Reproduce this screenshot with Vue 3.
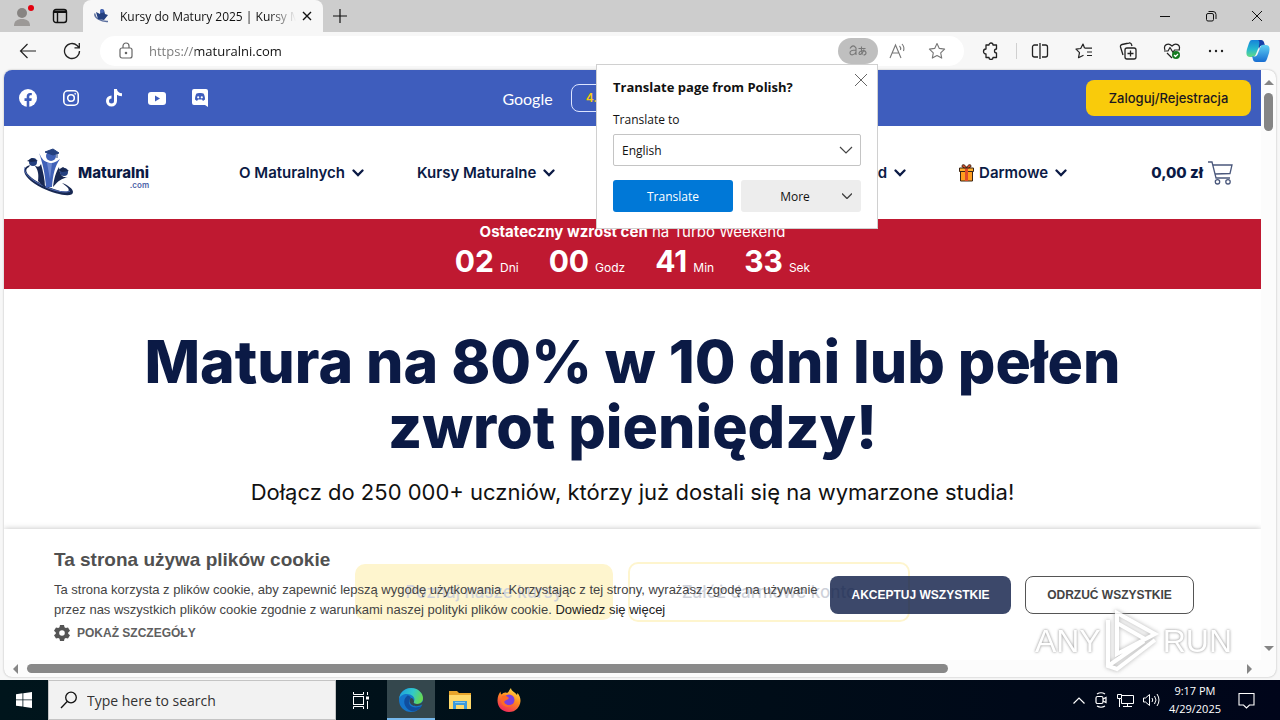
<script setup>
import { ref } from 'vue'

const url = ref('https://maturalni.com')
const language = ref('English')
const counters = [
  { value: '02', unit: 'Dni' },
  { value: '00', unit: 'Godz' },
  { value: '41', unit: 'Min' },
  { value: '33', unit: 'Sek' }
]
const menu = [
  { label: 'O Maturalnych' },
  { label: 'Kursy Maturalne' },
  { label: 'Turbo Weekend', push: true },
  { label: 'Darmowe', gift: true }
]
</script>

<template>
  <div class="desktop">
    <div class="browser">
      <header class="tabs">
        <button class="ico profile" aria-label="Profile">
          <svg width="30" height="30" viewBox="0 0 30 30"><circle cx="15" cy="12" r="5" fill="#878482" /><path d="M7 25c0-5 3-7 8-7s8 2 8 7z" fill="#9c9997" /><circle cx="24" cy="7" r="3" fill="#e3000f" /></svg>
        </button>
        <button class="ico workspace" aria-label="Tab actions">
          <svg width="16" height="16" viewBox="0 0 16 16" fill="none" stroke="#111" stroke-width="1.4"><rect x="1.5" y="1.5" width="13" height="13" rx="2.5" /><path d="M2 3.2h12M2 4.4h12M5.5 4v10" /></svg>
        </button>
        <div class="tab">
          <svg class="fav" width="16" height="16" viewBox="0 0 16 16"><path d="M1 5.500c-1 4 6 8.500 13 8" fill="none" stroke="#5b6f9e" stroke-width="1.500" /><path d="M2 4l4 2 1-5 3 1 1 4 3 1-4 5-6-1z" fill="#24407f" /><circle cx="8" cy="3" r="2" fill="#4565b5" /></svg>
          <span class="tab-title">Kursy do Matury 2025 | Kursy Maturalne</span>
          <button class="ico" aria-label="Close tab"><svg width="10" height="10" viewBox="0 0 10 10" stroke="#111" stroke-width="1.400"><path d="M1 1l8 8M9 1L1 9" /></svg></button>
        </div>
        <button class="ico newtab" aria-label="New tab"><svg width="14" height="14" viewBox="0 0 14 14" stroke="#111" stroke-width="1.200"><path d="M7 0v14M0 7h14" /></svg></button>
        <div class="window-buttons">
          <button class="ico" aria-label="Minimize"><svg width="12" height="12" viewBox="0 0 12 12" stroke="#111"><path d="M1 6.500h10" /></svg></button>
          <button class="ico" aria-label="Restore"><svg width="12" height="12" viewBox="0 0 12 12" fill="none" stroke="#111"><rect x="1.500" y="3.500" width="7" height="7.500" rx="1.500" /><path d="M3.500 1.500H8a3 3 0 0 1 3 3V9" /></svg></button>
          <button class="ico" aria-label="Close"><svg width="12" height="12" viewBox="0 0 12 12" stroke="#111"><path d="M1 1l10 10M11 1L1 11" /></svg></button>
        </div>
      </header>

      <div class="toolbar">
        <button class="ico nav-btn" aria-label="Back"><svg width="18" height="18" viewBox="0 0 18 18" fill="none" stroke="#222" stroke-width="1.200"><path d="M17 9H1.500M8.500 2l-7 7 7 7" /></svg></button>
        <button class="ico nav-btn" aria-label="Reload"><svg width="18" height="18" viewBox="0 0 18 18" fill="none" stroke="#222" stroke-width="1.300"><path d="M16.500 9a7.500 7.500 0 1 1-2.400-5.500L16 5.500M16.300 1v4.800h-4.800" /></svg></button>
        <div class="address">
          <svg width="16" height="18" viewBox="0 0 16 18" fill="none" stroke="#666" stroke-width="1.200"><rect x="2" y="6" width="12" height="10" rx="2" /><path d="M5 6V4a3 3 0 0 1 6 0v2" /><circle cx="8" cy="11" r=".7" fill="#666" /></svg>
          <input v-model="url" class="url" type="text" aria-label="Address" />
          <button class="ico translate-pill" aria-label="Translate page">
            <svg width="18" height="14" viewBox="0 0 18 14" fill="none" stroke="#777" stroke-width="1.100"><path d="M1 4.500Q4-.5 7 4v7M7 6Q1 6 1 8.800c0 3.200 5 2.400 6-.8M9.500 4.500h7M12.500 2.500c-.5 4 0 6 1 8M15 5.500c-1 4-5 6.500-5 4S16 5 17 8.500c.3 2-1.500 2.500-2.500 2.500" /></svg>
          </button>
          <button class="ico" aria-label="Read aloud"><svg width="18" height="16" viewBox="0 0 18 16" fill="none" stroke="#777" stroke-width="1.100"><path d="M1 15L6.500 2 12 15M3 10h7M10.500 3a4 4 0 0 1 1 4M13 1a7 7 0 0 1 1.500 7" /></svg></button>
          <button class="ico star" aria-label="Favorite"><svg width="18" height="18" viewBox="0 0 18 18" fill="none" stroke="#777" stroke-width="1.100" stroke-linejoin="round"><path d="M9 1.500l2.300 4.900 5.300.7-3.900 3.700 1 5.300L9 13.500l-4.700 2.600 1-5.300L1.400 7.100l5.300-.7z" /></svg></button>

          <section class="popup" aria-label="Translate page">
            <div class="popup-head">
              <h2>Translate page from Polish?</h2>
              <button class="ico" aria-label="Dismiss"><svg width="14" height="14" viewBox="0 0 14 14" stroke="#666"><path d="M1 1l12 12M13 1L1 13" /></svg></button>
            </div>
            <label for="lang">Translate to</label>
            <div class="select-wrap">
              <select id="lang" v-model="language"><option>English</option></select>
              <svg width="14" height="8" viewBox="0 0 14 8" fill="none" stroke="#444" stroke-width="1.200"><path d="M1 1l6 6 6-6" /></svg>
            </div>
            <div class="popup-actions">
              <button class="primary">Translate</button>
              <button class="more">More<svg width="10" height="6" viewBox="0 0 10 6" fill="none" stroke="#444" stroke-width="1.400"><path d="M0 .5l5 5 5-5" /></svg></button>
            </div>
          </section>
        </div>
        <div class="tools">
          <button class="ico" aria-label="Extensions"><svg width="18" height="18" viewBox="0 0 18 18" fill="none" stroke="#222" stroke-width="1.300" stroke-linejoin="round"><path d="M4 3h3a2 2 0 0 1 4 0h3.500v4a2 2 0 0 0 0 4v4.500H11a2 2 0 0 1-4 0H4V12a2.300 2.300 0 1 1 0-5z" /></svg></button>
          <i class="divider"></i>
          <button class="ico" aria-label="Split screen"><svg width="18" height="18" viewBox="0 0 18 18" fill="none" stroke="#222" stroke-width="1.300"><path d="M7 3H3.500A2 2 0 0 0 1.500 5v8a2 2 0 0 0 2 2H7M11 3h3.500a2 2 0 0 1 2 2v8a2 2 0 0 1-2 2H11M9 1v16" /></svg></button>
          <button class="ico" aria-label="Favorites"><svg width="18" height="18" viewBox="0 0 18 18" fill="none" stroke="#222" stroke-width="1.200" stroke-linejoin="round"><path d="M9.500 6.200h7.500M12 10h5M12 13.500h5M9.500 6L8 2 5.700 6.500 1 7.200l3.500 3.500-1 5 5-2.500" /></svg></button>
          <button class="ico" aria-label="Collections"><svg width="18" height="18" viewBox="0 0 18 18" fill="none" stroke="#222" stroke-width="1.300"><rect x="6" y="6" width="11" height="11" rx="2" /><path d="M11.500 8.500v6M8.500 11.500h6M4 13l-2.500-8a2 2 0 0 1 1.500-2.500L10 1a2 2 0 0 1 2.500 1.500l.5 1.500" /></svg></button>
          <button class="ico" aria-label="Browser essentials"><svg width="18" height="18" viewBox="0 0 18 18" fill="none" stroke="#222" stroke-width="1.200" stroke-linejoin="round"><path d="M2 8C0 3 5 0 9 4c4-4 9-1 7 4M1 9h4l2-3.500 3 5L11.500 8H17M4 11l5 5" /><circle cx="13" cy="13" r="4" fill="#157b22" stroke="none" /><path d="M11 13l1.500 1.500L15 12" stroke="#fff" /></svg></button>
          <button class="ico" aria-label="Settings and more"><svg width="18" height="18" viewBox="0 0 18 18" fill="#222"><circle cx="3" cy="9" r="1.200" /><circle cx="9" cy="9" r="1.200" /><circle cx="15" cy="9" r="1.200" /></svg></button>
          <button class="ico copilot" aria-label="Copilot">
            <svg width="24" height="24" viewBox="0 0 24 24"><defs><linearGradient id="ca" x1="0" y1="0" x2="0" y2="1"><stop offset="0" stop-color="#1683d9" /><stop offset=".55" stop-color="#25b9cf" /><stop offset="1" stop-color="#65db83" /></linearGradient><linearGradient id="cb" x1="0" y1="0" x2="0" y2="1"><stop offset="0" stop-color="#5fd0f4" /><stop offset="1" stop-color="#176dd1" /></linearGradient></defs><path d="M6 1h8c3 0 3 3 4 6-4-1-5 0-6 3l-2 5c-1 3-3 3-6 3-4 0-4-4-3-8l2-6c1-2 1-3 3-3z" fill="url(#ca)" /><path d="M18 23h-8c-3 0-3-3-4-6 4 1 5 0 6-3l2-5c1-3 3-3 6-3 4 0 4 4 3 8l-2 6c-1 2-1 3-3 3z" fill="url(#cb)" /><path d="M12 1h3c3 0 3 3 4 5-4-1-5 1-6 4-1-3 2-7-1-9z" fill="#173fa8" /></svg>
          </button>
        </div>
      </div>

      <div class="surface">
        <main class="page">
          <div class="topbar">
            <nav class="social" aria-label="Social media">
              <a href="#" aria-label="Facebook"><svg width="18" height="18" viewBox="0 0 18 18"><circle cx="9" cy="9" r="9" fill="#fff" /><path d="M7.700 18v-6H5.500V9.300h2.200V7.400c0-2.300 1.300-3.500 3.300-3.500l1.800.2v2.100h-1.100c-1.100 0-1.400.6-1.400 1.300v1.800h2.500l-.4 2.700h-2.100v6z" fill="#3e5dbd" /></svg></a>
              <a href="#" aria-label="Instagram"><svg width="16" height="16" viewBox="0 0 16 16" fill="none" stroke="#fff" stroke-width="1.600"><rect x=".8" y=".8" width="14.400" height="14.400" rx="4" /><circle cx="8" cy="8" r="3.300" /><circle cx="12.200" cy="3.800" r=".5" fill="#fff" stroke-width=".8" /></svg></a>
              <a href="#" aria-label="TikTok"><svg width="16" height="18" viewBox="0 0 16 18" fill="none" stroke="#fff" stroke-width="3"><path d="M9.500 0v12a4 4 0 1 1-4-4M9.500.5c.5 3 2.500 5 6.500 5.300" /></svg></a>
              <a href="#" aria-label="YouTube"><svg width="18" height="13" viewBox="0 0 18 13"><rect width="18" height="13" rx="3" fill="#fff" /><path d="M7 3.500v6l5-3z" fill="#3e5dbd" /></svg></a>
              <a href="#" aria-label="Discord"><svg width="16" height="18" viewBox="0 0 16 18"><path d="M2 0h12a2 2 0 0 1 2 2v16l-3-2H2a2 2 0 0 1-2-2V2a2 2 0 0 1 2-2z" fill="#fff" /><path d="M4.500 4.500L7 4h2l2.500.5c1 1.500 1.500 3.500 1.500 6L11 12l-1-1.500H6L5 12l-2-1.500c0-2.500.5-4.500 1.500-6z" fill="#3e5dbd" /><circle cx="6.200" cy="8.300" r="1.100" fill="#fff" /><circle cx="9.800" cy="8.300" r="1.100" fill="#fff" /></svg></a>
            </nav>
            <div class="rating"><span class="google">Google</span><span class="score">4.9 / 5</span></div>
            <button class="login">Zaloguj/Rejestracja</button>
          </div>

          <div class="mainnav">
            <a class="logo" href="#" aria-label="Maturalni.com">
              <svg width="54" height="50" viewBox="2 0 54 50"><path d="M8 17C-3 20 2 31 20 40c15 7 31 10 31 4 0-3-5-7-11-9 6 4 8 7 6 8-4 2-17-2-28-8C5 28 1 22 7 19z" fill="#182852" /><path d="M2 19c0 8 10 15 24 21 10 4 19 5 22 3" fill="none" stroke="#5671bd" stroke-width="1" /><path d="M17 5c3 6 5 9 11 10 5 0 7-2 10-4-5 7-7 15-8 28h-6c-1-13-3-23-7-34z" fill="#4061b8" /><path d="M12 17c3 2 5 3 7-1 2 8 4 15 4 24l-7-7c1-7 0-12-4-16zM31 39c1-9 3-15 6-20 1 9 4 11 9 10-7 2-9 3-15 10z" fill="#182852" /><circle cx="29" cy="8" r="5" fill="#3f60b5" /><path d="M23 4l8-3 6 4-6 2zM35 5v5" fill="#24407f" stroke="#24407f" /><circle cx="11" cy="14" r="4" fill="#24407f" /><path d="M5 13l5-3 6 3-7 1z" fill="#182852" /><circle cx="42" cy="24" r="4" fill="#24407f" /><path d="M36 22l5-3 6 4-7 1z" fill="#182852" /><path d="M25 15l3 16 2-16" fill="#6e89d0" /></svg>
              <span class="wordmark"><b>Maturalni</b><small>.com</small></span>
            </a>
            <nav class="menu" aria-label="Main menu">
              <a v-for="m in menu" :key="m.label" href="#" :class="{ push: m.push }">
                <svg v-if="m.gift" class="gift" width="15" height="18" viewBox="0 0 15 18" stroke="#3b2415" stroke-width="1"><path d="M1.500 7h12v10h-12z" fill="#ff9d1e" /><path d="M.5 4h14v3.500H.5z" fill="#ffb02e" /><path d="M6 4h3v13H6z" fill="#df4b28" stroke="none" /><path d="M7.500 4C3 4 2 2 3.500 1S7 2 7.500 4C8 2 10 0 11.500 1S12 4 7.500 4z" fill="#d5502b" /></svg>
                {{ m.label }}
                <svg class="chev" width="12" height="8" viewBox="0 0 12 8" fill="none" stroke="#0b1a45" stroke-width="2.300" stroke-linecap="round"><path d="M1.500 1.500L6 6l4.500-4.500" /></svg>
              </a>
            </nav>
            <a class="cart" href="#">0,00 zł
              <svg width="25" height="24" viewBox="0 0 25 24" fill="none" stroke="#4b587c" stroke-width="1.300"><path d="M0 1h4l4 16h14M5 4h19l-2 8.500L7 13" /><circle cx="9.500" cy="20.800" r="2.200" /><circle cx="20" cy="20.800" r="2.200" /></svg>
            </a>
          </div>

          <div class="promo">
            <p><b>Ostateczny wzrost cen</b> na Turbo Weekend</p>
            <div class="counters"><span v-for="c in counters" :key="c.unit"><b>{{ c.value }}</b>{{ c.unit }}</span></div>
          </div>

          <section class="hero">
            <h1>Matura na 80% w 10 dni lub pełen<br />zwrot pieniędzy!</h1>
            <p>Dołącz do 250 000+ uczniów, którzy już dostali się na wymarzone studia!</p>
            <div class="cta"><button class="filled">Poznaj nasze kursy</button><button>Załóż darmowe konto</button></div>
          </section>

          <section class="cookies" aria-label="Cookies">
            <div class="cookie-copy">
              <h2>Ta strona używa plików cookie</h2>
              <p>Ta strona korzysta z plików cookie, aby zapewnić lepszą wygodę użytkowania. Korzystając z tej strony, wyrażasz zgodę na używanie<br />przez nas wszystkich plików cookie zgodnie z warunkami naszej polityki plików cookie. <a href="#">Dowiedz się więcej</a></p>
              <button class="details"><svg width="16" height="16" viewBox="0 0 16 16"><path fill="#555" fill-rule="evenodd" d="M6 0h4l.5 2.300 1.300.8L14 2.400l2 3.400L14.200 7.400v1.300L16 10.200l-2 3.400-2.200-.7-1.300.8L10 16H6l-.5-2.300-1.300-.8-2.200.7-2-3.400 1.800-1.500V7.400L0 5.800l2-3.400 2.200.7 1.300-.8zM8 5.200a2.800 2.800 0 1 0 0 5.600 2.800 2.800 0 0 0 0-5.600z" /></svg>POKAŻ SZCZEGÓŁY</button>
            </div>
            <div class="cookie-actions"><button class="accept">AKCEPTUJ WSZYSTKIE</button><button class="reject">ODRZUĆ WSZYSTKIE</button></div>
          </section>
        </main>
        <div class="vbar"><i class="tri up"></i><i class="vthumb"></i><i class="tri down"></i></div>
        <div class="hbar"><i class="tri left"></i><div class="htrack"><i class="hthumb"></i></div><i class="tri right"></i></div>
        <div class="watermark" aria-hidden="true">
          <span>ANY</span>
          <svg width="58" height="64" viewBox="0 0 58 64" fill="none" stroke="#fff" stroke-width="4" stroke-linejoin="miter"><path d="M14 4v41L52 25zM14 4l38 21M5 11v46l9 3 38-29M5 57l36-25M14 14l28 16" /></svg>
          <span>RUN</span>
        </div>
      </div>
    </div>

    <footer class="taskbar">
      <button class="ico start" aria-label="Start"><svg width="16" height="16" viewBox="0 0 16 16" fill="#fff"><path d="M0 2.200l6.500-.9v6.200H0zM7.300 1.200L16 0v7.500H7.300zM0 8.300h6.500v6.300L0 13.700zM7.300 8.300H16V16l-8.700-1.200z" /></svg></button>
      <label class="search"><svg width="18" height="18" viewBox="0 0 18 18" fill="none" stroke="#111" stroke-width="1.300"><circle cx="11" cy="6.500" r="5.300" /><path d="M7.200 10.500L1 17" /></svg><input type="text" placeholder="Type here to search" aria-label="Search" /></label>
      <button class="ico task" aria-label="Task view"><svg width="17" height="17" viewBox="0 0 17 17" fill="none" stroke="#fff"><rect x="1.500" y="4.500" width="10" height="8" /><path d="M1.500 0v2.500h10V0M1.500 17v-2.500h10V17M15.500 0v3M15.500 9v8" /><path d="M14 4.500h3v3h-3z" fill="#fff" stroke="none" /></svg></button>
      <button class="ico task active" aria-label="Microsoft Edge">
        <svg width="24" height="24" viewBox="0 0 24 24"><defs><linearGradient id="eg" x1="0" y1=".2" x2="1" y2=".5"><stop offset="0" stop-color="#1c9ee0" /><stop offset=".55" stop-color="#31c9c9" /><stop offset="1" stop-color="#67d94f" /></linearGradient></defs><circle cx="12" cy="12" r="12" fill="#1575ca" /><path d="M0 11C1 4 6 0 12 0c7 0 12 5 12 10 0 4-3 6-6 6-3 0-4-1-3-2.500C17 9 12 6 8 6c-4 0-7 2-8 5z" fill="url(#eg)" /><path d="M8 8c-5 4-3 12 4 15 5 1 9-2 11-5-7 3-13 1-13-4 0-2 1-3 2-4-1-2-3-3-4-2z" fill="#104e9e" /><path d="M12 10c-2 2-2 5 1 7 3 2 7 1 9 0l2-1v-3c-1 2-3 3-6 3-3 0-4-1-3-2.500 0-2-2-4-3-3.500z" fill="#34474d" /></svg>
      </button>
      <button class="ico task" aria-label="File Explorer"><svg width="22" height="20" viewBox="0 0 22 20"><path d="M0 1h8l2 2h12v16H0z" fill="#e8a52b" /><path d="M0 5h22v14H0z" fill="#ffd96b" /><path d="M4 11h14v8h-3v-4H7v4H4z" fill="#3e9bdc" /><path d="M6 12h10v1H6z" fill="#87c8ef" /></svg></button>
      <button class="ico task" aria-label="Firefox"><svg width="24" height="24" viewBox="0 0 24 24"><defs><linearGradient id="ff" x1=".8" y1="0" x2=".3" y2="1"><stop offset="0" stop-color="#ffe34d" /><stop offset=".45" stop-color="#ff8d1e" /><stop offset="1" stop-color="#f0265c" /></linearGradient></defs><path d="M12 24C5 24 .5 19 .5 12.500c0-4 1.500-7 3-9 0 2 .5 2.500 1 3C6 5 8 4 10 5c2-1 2-3 4-5 0 3 4 4 6 7l.5-2c2 2 3 5 3 8C23 19 19 24 12 24z" fill="url(#ff)" /><circle cx="12" cy="12" r="5.500" fill="#7a3fe0" /><path d="M5 8c3-1 5 0 7 2-1 2-4 2-5 4 2 4 7 4 10 1-1 5-12 6-13-2z" fill="#ff6a25" /></svg></button>
      <div class="tray">
        <svg width="12" height="7" viewBox="0 0 12 7" fill="none" stroke="#fff" stroke-width="1.200"><path d="M.5 6.500L6 1l5.500 5.500" /></svg>
        <svg width="14" height="16" viewBox="0 0 14 16" fill="none" stroke="#fff" stroke-width="1.200"><rect x="2" y="4.500" width="7" height="7" rx="1.500" /><path d="M9 7l3-1.500v5L9 9M3 2q4-2.500 8 0M3 14q4 2.500 8 0" /></svg>
        <svg width="17" height="15" viewBox="0 0 17 15" fill="none" stroke="#fff"><path d="M5 2.500h11.500v8H4.500V6M10.500 10.500v3M6 13.500h9M.5 1.500h4v4h-4zM2.500 5.500V14" /></svg>
        <svg width="17" height="14" viewBox="0 0 17 14" fill="none" stroke="#fff"><path d="M.5 5h2L6.500 1.500v11L2.500 9h-2zM9 5q1.500 2 0 4M11.500 3q3 4 0 8M14 1q4 6 0 12" /></svg>
        <div class="clock"><span>9:17 PM</span><span>4/29/2025</span></div>
        <svg class="note" width="17" height="17" viewBox="0 0 17 17" fill="none" stroke="#fff" stroke-width="1.100"><path d="M1 1.500h15v11.500h-4.500L8.500 16l-3-3H1z" /></svg>
      </div>
    </footer>
  </div>
</template>

<style>
html, body { margin: 0; overflow: hidden; }
</style>

<style scoped>
* { box-sizing: border-box; }
h1, h2, p { margin: 0; }
button { font: inherit; color: inherit; cursor: pointer; }
a { color: inherit; text-decoration: none; }
svg { display: block; flex: none; }
.ico { border: 0; background: none; padding: 0; display: flex; align-items: center; justify-content: center; flex: none; }
.desktop { height: 100vh; display: flex; flex-direction: column; font-family: "Open Sans", "Noto Sans", sans-serif; color: #111; font-size: 12px; }
.browser { flex: 1; min-height: 0; display: flex; flex-direction: column; background: #f7f7f7; }

.tabs { height: 32px; display: flex; align-items: stretch; background: #cdcdcd; flex: none; }
.profile { width: 44px; }
.workspace { width: 32px; }
.tab { margin-left: 7px; width: 240px; padding: 0 11px; display: flex; align-items: center; background: #f7f7f7; border-radius: 8px 8px 0 0; }
.tab-title { flex: 1; margin: 0 6px 0 10px; white-space: nowrap; overflow: hidden; mask-image: linear-gradient(90deg, #000 85%, transparent); }
.newtab { width: 34px; }
.window-buttons { margin-left: auto; display: flex; }
.window-buttons .ico { width: 46px; }

.toolbar { height: 38px; display: flex; align-items: center; padding: 0 10px 0 6px; flex: none; }
.nav-btn { width: 44px; height: 32px; }
.address { position: relative; flex: 1; height: 30px; margin-left: 6px; padding: 0 8px 0 18px; display: flex; align-items: center; background: #fff; border-radius: 15px; }
.url { flex: 1; min-width: 0; margin-left: 15px; padding: 0; border: 0; outline: 0; font: 13px "Open Sans", sans-serif; color: transparent; background: linear-gradient(90deg, #777 46px, #111 46px); background-clip: text; -webkit-background-clip: text; }
.address .ico { width: 40px; height: 26px; }
.address .star { width: 38px; }
.address .translate-pill { background: #bfbfbf; border-radius: 13px; }
.tools { display: flex; align-items: center; gap: 26px; margin-left: 18px; }
.divider { width: 1px; height: 16px; background: #d0d0d0; margin: 0 -12px 0 -10px; }
.copilot { margin-left: -5px; }

.address .popup { position: absolute; z-index: 5; top: 28px; right: 86px; width: 282px; padding: 8px 16px 16px; background: #fff; border: 1px solid #d0d0d0; display: flex; flex-direction: column; }
.popup-head { display: flex; justify-content: space-between; align-items: center; }
.popup h2 { font-size: 13px; line-height: 28px; }
.address .popup-head .ico { width: 14px; height: 14px; margin: 0 -7px 14px 0; }
.popup label { margin-top: 10px; line-height: 18px; }
.select-wrap { margin-top: 5px; display: grid; align-items: center; }
.select-wrap > * { grid-area: 1 / 1; }
.select-wrap svg { justify-self: end; margin-right: 8px; pointer-events: none; }
.select-wrap select { appearance: none; width: 100%; height: 32px; padding: 0 8px; border: 1px solid #c4c4c4; border-radius: 2px; background: #fff; font: 12px "Open Sans", sans-serif; color: #111; }
.popup-actions { margin-top: 14px; display: grid; grid-template-columns: 1fr 1fr; gap: 8px; }
.popup-actions button { height: 32px; border: 0; border-radius: 3px; }
.primary { background: #0078d7; color: #fff; }
.more { display: grid; grid-template-columns: 1fr auto; align-items: center; padding: 0 9px 0 7px; background: #ededed; }

.surface { position: relative; flex: 1; min-height: 0; margin: 0 4px 3px; display: grid; grid-template: minmax(0, 1fr) 17px / minmax(0, 1fr) 15px; border-radius: 8px; overflow: hidden; background: #fcfcfc; box-shadow: 0 0 2px #aaa; }
.page { position: relative; overflow: hidden; background: #fff; font-family: Inter, sans-serif; color: #0b1a45; }
.topbar { height: 56px; display: grid; grid-template-columns: 1fr auto 1fr; align-items: center; background: #3e5dbd; padding: 0 10px 0 14px; }
.social { display: flex; gap: 23px; }
.social a { width: 20px; display: flex; justify-content: center; align-items: center; }
.rating { display: flex; align-items: center; gap: 18px; color: #fff; }
.google { font: 16px Lato, sans-serif; }
.score { border: 1px solid #dce4ff; border-radius: 8px; width: 196px; height: 28px; padding-left: 14px; line-height: 26px; font-weight: 600; color: #f9cb0b; }
.login { justify-self: end; width: 165px; height: 36px; border: 0; border-radius: 8px; background: #f9cb0b; font-size: 13px; font-weight: 500; color: #1b1720; }
.mainnav { height: 93px; display: flex; align-items: center; padding: 0 28px 0 20px; font-size: 15px; font-weight: 600; }
.logo { width: 128px; display: flex; align-items: center; }
.wordmark { display: flex; flex-direction: column; align-items: flex-end; padding-top: 8px; }
.wordmark b { font-size: 15px; font-weight: 800; line-height: 16px; }
.wordmark small { font-size: 8px; line-height: 8px; color: #4c64a8; }
.menu { flex: 1; display: flex; gap: 53px; margin: 0 84px 0 87px; }
.menu a { display: flex; align-items: center; gap: 7px; white-space: nowrap; }
.menu .gift { margin-right: -2px; }
.menu .push { margin-left: auto; }
.cart { display: flex; align-items: center; gap: 5px; font-weight: 800; white-space: nowrap; }
.promo { height: 70px; background: #bf1931; color: #fff; text-align: center; }
.promo p { font-size: 15px; line-height: 26px; }
.counters { display: flex; justify-content: center; gap: 30px; line-height: 32px; font-size: 12px; }
.counters b { margin-right: 6px; font-size: 30px; }
.hero { text-align: center; padding-top: 40px; white-space: nowrap; }
.hero h1 { font-size: 59px; font-weight: 800; line-height: 65px; }
.hero p { margin-top: 20px; font-size: 22px; line-height: 26px; color: #111; }
.cta { margin-top: 57px; display: flex; justify-content: center; gap: 15px; }
.cta button { width: 282px; height: 60px; border: 2px solid #f9cb0b; border-radius: 10px; background: #fff; font-size: 17px; font-weight: 500; }
.cta .filled { width: 258px; height: 56px; margin-top: 2px; background: #f9cb0b; }
.cookies { position: absolute; left: 0; right: 0; bottom: 0; height: 131px; padding: 16px 67px 0 50px; display: flex; justify-content: space-between; align-items: flex-start; background: rgba(255, 255, 255, .8); box-shadow: 0 0 6px rgba(0, 0, 0, .25); font-family: "Liberation Sans", sans-serif; color: #444; }
.cookie-copy { white-space: nowrap; }
.cookies h2 { font-size: 19px; line-height: 30px; color: #505050; }
.cookies p { margin-top: 5px; font-size: 13px; line-height: 20px; }
.cookies p a { color: #222; }
.details { display: flex; align-items: center; gap: 7px; margin-top: 5px; padding: 0; border: 0; background: none; font-size: 12px; font-weight: bold; line-height: 16px; color: #606060; }
.cookie-actions { display: flex; gap: 14px; margin: 31px 0 0 12px; }
.cookie-actions button { height: 38px; border-radius: 8px; font-size: 12px; font-weight: bold; white-space: nowrap; padding: 0; }
.accept { width: 181px; border: 0; background: rgba(11, 26, 69, .8); color: #fff; }
.reject { width: 169px; border: 1px solid #555; background: #fff; }

.vbar { display: flex; flex-direction: column; align-items: center; padding: 10px 0 9px; }
.vthumb { width: 9px; height: 38px; margin-top: 8px; border-radius: 5px; background: #858585; }
.hbar { display: flex; align-items: center; padding: 0 9px; }
.htrack { flex: 1; margin: 0 8px 0 9px; }
.hthumb { display: block; width: 76%; height: 9px; border-radius: 5px; background: #888; }
.tri { border: 5px solid transparent; }
.up { border-top: 0; border-bottom-color: #858585; }
.down { border-bottom: 0; border-top-color: #858585; margin-top: auto; }
.left { border-left: 0; border-right-color: #858585; }
.right { border-right: 0; border-left-color: #858585; }
.watermark { position: absolute; right: 44px; bottom: 4px; display: flex; align-items: center; gap: 2px; font: 32px/50px "Liberation Sans", sans-serif; color: #fff; text-shadow: 0 0 3px #999, 0 0 2px #bbb; opacity: .9; }
.watermark svg { filter: drop-shadow(0 0 2px #aaa); }

.taskbar { height: 40px; flex: none; display: flex; align-items: stretch; background: linear-gradient(90deg, #00151c, #000d18 60%, #00051a); color: #fff; }
.start { width: 48px; }
.search { width: 288px; display: flex; align-items: center; gap: 9px; padding-left: 11px; background: #f2f2f2; border: 1px solid #c4c4c4; }
.search input { flex: 1; min-width: 0; padding: 0; border: 0; outline: 0; background: none; font: 14px "Open Sans", sans-serif; }
.search input::placeholder { color: #333; opacity: 1; }
.task { width: 49px; }
.task.active { margin-left: 2px; width: 48px; background: #34474d; box-shadow: inset 0 -2px #76b9ed; }
.tray { margin-left: auto; display: flex; align-items: center; gap: 9px; padding-right: 25px; }
.clock { display: flex; flex-direction: column; align-items: center; font-size: 11px; line-height: 18px; white-space: nowrap; }
.note { margin-left: 8px; }
</style>
